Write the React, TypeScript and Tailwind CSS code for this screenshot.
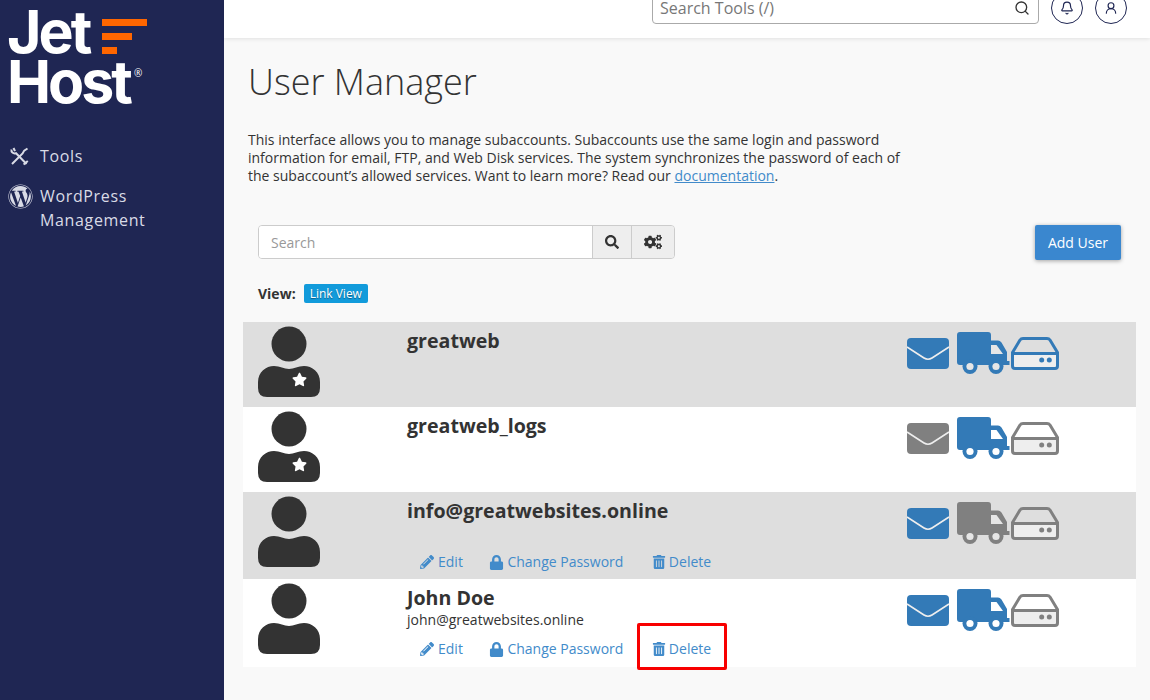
import { Bell, Search, UserRound } from "lucide-react";
import { FaCogs, FaLock, FaPencilAlt, FaSearch, FaStar, FaTrashAlt, FaWordpress } from "react-icons/fa";

const BLUE = "#337ab7";
const GRAY = "#808080";

function MailIcon({ on }: { on: boolean }) {
  return (
    <svg width="42" height="31" viewBox="0 0 42 31" className="shrink-0">
      <rect width="42" height="31" rx="4" fill={on ? BLUE : GRAY} />
      <path d="M0 9 L17 20 Q21 22.5 25 20 L42 9" fill="none" stroke="#eee" strokeWidth="1.6" />
    </svg>
  );
}

function TruckIcon({ on, bg }: { on: boolean; bg: string }) {
  const c = on ? BLUE : GRAY;
  return (
    <svg width="53" height="42" viewBox="0 0 53 42" className="shrink-0">
      <path d="M3 0 H31 Q34 0 34 3 V8.5 H41 Q43 8.5 44.5 10.5 L50 20 V29 H52.5 V33 H3 Q0 33 0 30 V3 Q0 0 3 0 Z" fill={c} />
      <path d="M34 13 H39.5 L46 22 H34 Z" fill={bg} />
      <circle cx="13" cy="34.5" r="7.5" fill={c} />
      <circle cx="39" cy="34.5" r="7.5" fill={c} />
      <circle cx="13" cy="34.5" r="3.6" fill={bg} />
      <circle cx="39" cy="34.5" r="3.6" fill={bg} />
    </svg>
  );
}

function DiskIcon({ on }: { on: boolean }) {
  const c = on ? BLUE : GRAY;
  return (
    <svg width="48" height="33" viewBox="0 0 48 33" className="shrink-0">
      <path d="M2 16 H46 V29 Q46 31.5 43.5 31.5 H4.5 Q2 31.5 2 29 Z" fill="#eeeeee" />
      <path d="M12 1.5 H36 Q38 1.5 39 3 L46.5 15.5 V29 Q46.5 31.5 44 31.5 H4 Q1.5 31.5 1.5 29 V15.5 L9 3 Q10 1.5 12 1.5 Z" fill="none" stroke={c} strokeWidth="3" strokeLinejoin="round" />
      <path d="M1.5 16.5 H46.5" stroke={c} strokeWidth="3" />
      <circle cx="30.7" cy="23" r="2.5" fill={c} />
      <circle cx="38.3" cy="23" r="2.5" fill={c} />
    </svg>
  );
}

function Avatar({ star }: { star: boolean }) {
  return (
    <div className="relative w-[62px] h-[71px]">
      <svg width="62" height="71" viewBox="0 0 62 71">
        <circle cx="31" cy="18" r="17.5" fill="#333" />
        <path d="M0 60 V56 C0 46 8 40 16 40 C22 40 26 43 31 43 C36 43 40 40 46 40 C54 40 62 46 62 56 V62 Q62 71 53 71 H9 Q0 71 0 62 Z" fill="#333" />
      </svg>
      {star && <FaStar className="absolute left-[34px] top-[46px] text-white text-[15px]" />}
    </div>
  );
}

function Actions() {
  return (
    <div className="flex items-center text-[14px] leading-5 text-[#428bca] mt-auto">
      <a className="flex items-center gap-1 ml-[13px]"><FaPencilAlt className="text-[14px]" />Edit</a>
      <a className="flex items-center gap-[3px] ml-[26.5px]"><FaLock className="text-[15px]" />Change Password</a>
      <a className="flex items-center gap-[3px] ml-[28.5px]"><FaTrashAlt className="text-[14px]" />Delete</a>
    </div>
  );
}

type User = {
  name: string;
  email?: string;
  star?: boolean;
  actions?: boolean;
  mail: boolean;
  ftp: boolean;
  disk: boolean;
  height: string;
  gray: boolean;
};

const users: User[] = [
  { name: "greatweb", star: true, mail: true, ftp: true, disk: true, height: "h-[85px]", gray: true },
  { name: "greatweb_logs", star: true, mail: false, ftp: true, disk: false, height: "h-[85px]", gray: false },
  { name: "info@greatwebsites.online", actions: true, mail: true, ftp: false, disk: false, height: "h-[87px]", gray: true },
  { name: "John Doe", email: "john@greatwebsites.online", actions: true, mail: true, ftp: true, disk: false, height: "h-[88px]", gray: false },
];

function UserRow({ user }: { user: User }) {
  const bg = user.gray ? "#e6e6e6" : "#ffffff";
  return (
    <div className={`flex ${user.height} ${user.gray ? "bg-[#dedede]" : "bg-white"}`}>
      <div className="w-[164px] pl-[15px] pt-[4px] shrink-0">
        <Avatar star={!!user.star} />
      </div>
      <div className={`flex flex-col w-[500px] pt-[4px] shrink-0 ${user.email ? "pb-[8px]" : "pb-[7px]"}`}>
        <div className="text-[19.6px] leading-[30px] font-bold text-[#333]">{user.name}</div>
        {user.email && <div className="text-[14px] leading-5 text-[#333] -mt-[3px]">{user.email}</div>}
        {user.actions && <Actions />}
      </div>
      <div className="flex items-start pl-0 pt-[10px] gap-[1px]">
        <div className="mt-[6px]"><MailIcon on={user.mail} /></div>
        <div className="ml-[7px]"><TruckIcon on={user.ftp} bg={bg} /></div>
        <div className="mt-[5px]"><DiskIcon on={user.disk} /></div>
      </div>
    </div>
  );
}

export default function App() {
  return (
    <div className="relative flex h-[700px] w-[1150px] overflow-hidden bg-[#f9f9f9] font-['Open_Sans',sans-serif] text-[#333]">
      <aside className="w-[224px] shrink-0 bg-[#1f2653] text-[#d9dbe6]">
        <div className="relative h-[138px]">
          <div className="absolute left-[7px] top-[7px] font-['Inter',sans-serif] text-[59px] leading-[50px] font-bold tracking-[-3px] text-white">
            <div>Jet</div>
            <div>Host</div>
          </div>
          <div className="absolute left-[102px] top-[19px] flex flex-col gap-[7px]">
            <div className="h-[7px] w-[45px] bg-[#ff6600]" />
            <div className="h-[7px] w-[30px] bg-[#ff6600]" />
            <div className="h-[7px] w-[15px] bg-[#ff6600]" />
          </div>
          <div className="absolute left-[134px] top-[68px] text-[10px] leading-none text-white">®</div>
        </div>
        <nav className="text-[16px] tracking-[0.65px]">
          <div className="flex items-center h-[24px] mt-[6px] pl-[10px] gap-[11px]">
            <svg width="19" height="19" viewBox="0 0 19 19" fill="none" stroke="#d9dbe6" strokeWidth="2">
              <path d="M1.5 2.5 C1 5 3 7 6 6.2 L16.5 17" />
              <path d="M3.5 1 L5 4.2" />
              <path d="M17.5 1.5 L14.2 3.6 L12.6 6.4 L2 17" />
              <path d="M13.6 17.6 L17.8 14" />
            </svg>
            <span>Tools</span>
          </div>
          <div className="flex items-start mt-[16px] pl-[8px] gap-[8px] leading-[24px]">
            <FaWordpress className="text-[25px] shrink-0" />
            <span className="-ml-[1px]">WordPress<br />Management</span>
          </div>
        </nav>
      </aside>
      <main className="flex-1 min-w-0">
        <header className="flex h-[38px] items-end justify-end overflow-hidden bg-white shadow-[0_1px_4px_rgba(0,0,0,0.1)] pb-[14px] pr-[23px]">
          <div className="flex h-[32px] w-[387px] items-center justify-between rounded-b-[4px] border border-[#aaa] pl-[7px] pr-[8px] text-[16px] text-[#777]">
            <span>Search Tools (/)</span>
            <Search size={16} className="text-[#333]" />
          </div>
          <div className="ml-[12px] flex h-[32px] w-[32px] items-center justify-center rounded-full border border-[#1f2653] text-[#1f2653]">
            <Bell size={14} />
          </div>
          <div className="ml-[12px] flex h-[32px] w-[32px] items-center justify-center rounded-full border border-[#1f2653] text-[#1f2653]">
            <UserRound size={14} />
          </div>
        </header>
        <div className="pl-[19px] pr-[14px]">
          <h1 className="ml-[5px] mt-[20px] text-[36px] leading-[48px] font-light text-[#333]">User Manager</h1>
          <p className="ml-[5px] mt-[25px] w-[660px] text-[14px] leading-[18px] text-[#333]">
            This interface allows you to manage subaccounts. Subaccounts use the same login and password information for email, FTP, and Web Disk services. The system synchronizes the password of each of the subaccount’s allowed services. Want to learn more? Read our{" "}
            <a className="text-[#428bca] underline">documentation</a>.
          </p>
          <div className="ml-[15px] mt-[40px] flex items-start justify-between">
            <div className="flex h-[34px] w-[417px] overflow-hidden rounded-[4px] border border-[#ccc] text-[14px]">
              <div className="flex flex-1 items-center bg-white pl-[12px] text-[#999]">Search</div>
              <div className="flex w-[39px] items-center justify-center border-l border-[#ccc] bg-[#eee] text-[#333]"><FaSearch className="text-[14px]" /></div>
              <div className="flex w-[43px] items-center justify-center border-l border-[#ccc] bg-[#eee] text-[#333]"><FaCogs className="text-[18px]" /></div>
            </div>
            <button className="mr-[15px] h-[35px] w-[86px] rounded-[2px] bg-[#3a87cf] text-[14px] text-white shadow-[0_1px_4px_rgba(0,0,0,0.35)]">Add User</button>
          </div>
          <div className="ml-[15px] mt-[23px] flex items-center h-[20px]">
            <span className="text-[14px] font-bold">View:</span>
            <span className="ml-[8px] rounded-[2px] bg-[#129bdb] px-[6px] text-[12px] leading-[19px] text-white [text-shadow:0_1px_1px_rgba(0,0,0,0.4)]">Link View</span>
          </div>
          <div className="mt-[19px]">
            {users.map((u) => <UserRow key={u.name} user={u} />)}
          </div>
        </div>
      </main>
      <div className="absolute left-[637px] top-[623px] h-[47px] w-[90px] rounded-[2px] border-[3px] border-[#f80000]" />
    </div>
  );
}
